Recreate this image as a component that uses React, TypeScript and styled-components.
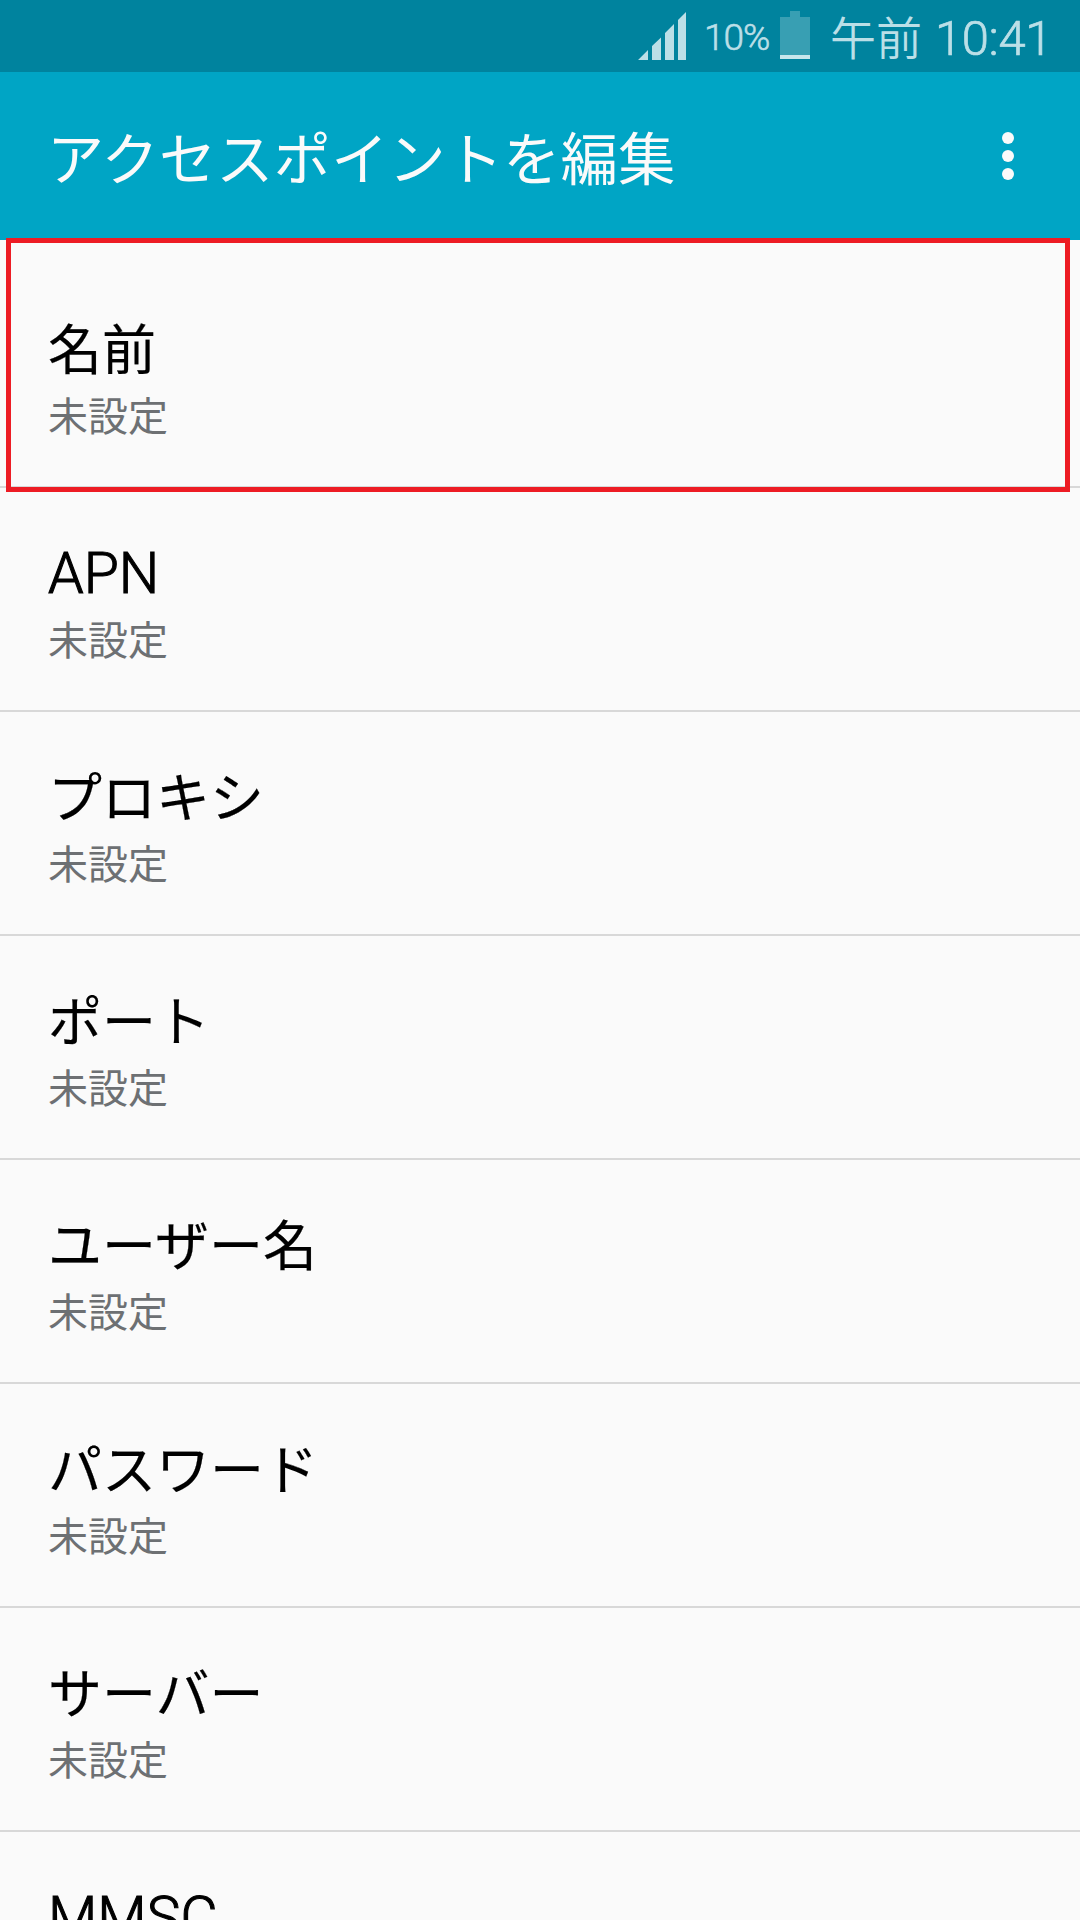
import React from "react";
import styled, { createGlobalStyle } from "styled-components";

const GlobalStyle = createGlobalStyle`
  * { box-sizing: border-box; }
  body {
    margin: 0;
    background: #fafafa;
    font-family: Roboto, "Noto Sans CJK JP", sans-serif;
  }
`;

const Screen = styled.div`
  width: 1080px;
  height: 1920px;
  overflow: hidden;
  background: #fafafa;
`;

const StatusBar = styled.div`
  display: flex;
  align-items: center;
  height: 72px;
  padding-left: 638px;
  background: #00839e;
  color: #bbdfe7;
  white-space: nowrap;
`;

const SignalIcon = styled.svg`
  display: block;
  flex: none;
  width: 48px;
  height: 48px;
`;

const BatteryLevel = styled.span`
  width: 74px;
  margin-left: 18px;
  padding-top: 3px;
  font-size: 37px;
  font-weight: 300;
  line-height: 44px;
  letter-spacing: -1px;
  -webkit-text-stroke: 0.6px currentColor;
`;

const BatteryIcon = styled.svg`
  display: block;
  flex: none;
  width: 30px;
  height: 48px;
  margin: 0 0 2px 2px;
`;

const Clock = styled.div`
  display: flex;
  align-items: baseline;
  height: 72px;
  margin-left: 20px;
  line-height: 77px;
`;

const Meridiem = styled.span`
  width: 105px;
  font-size: 46px;
  font-weight: 350;
`;

const Time = styled.span`
  font-size: 49px;
  font-weight: 300;
  letter-spacing: -0.4px;
  -webkit-text-stroke: 0.7px currentColor;
`;

const AppBar = styled.header`
  display: flex;
  align-items: center;
  justify-content: space-between;
  height: 168px;
  padding: 0 66px 0 47px;
  background: #00a5c5;
`;

const Title = styled.h1`
  margin: 0;
  padding-top: 9px;
  color: #fafafa;
  font-size: 57px;
  font-weight: 400;
  line-height: 84px;
  letter-spacing: 0.4px;
`;

const MenuButton = styled.button`
  display: flex;
  flex-direction: column;
  gap: 6px;
  margin: 0;
  padding: 0;
  border: 0;
  background: none;
`;

const Dot = styled.span`
  width: 12px;
  height: 12px;
  border-radius: 50%;
  background: #fafafa;
`;

const List = styled.ul`
  position: relative;
  margin: 0;
  padding: 24px 0 0;
  list-style: none;
`;

const Highlight = styled.div`
  position: absolute;
  top: -2px;
  left: 6px;
  width: 1064px;
  height: 254px;
  border: 5px solid #ed1c24;
`;

const Row = styled.li`
  height: 224px;
  padding: 50px 48px 0;
  border-bottom: 2px solid #d8d8d8;
`;

const Label = styled.div<{ $latin?: boolean }>`
  height: 72px;
  padding-top: ${(p) => (p.$latin ? 0 : 2)}px;
  color: #000;
  font-size: ${(p) => (p.$latin ? 57 : 54)}px;
  font-weight: ${(p) => (p.$latin ? 300 : 400)};
  line-height: 72px;
  white-space: nowrap;
  -webkit-text-stroke: ${(p) => (p.$latin ? 1.1 : 0.2)}px currentColor;
`;

const Summary = styled.div`
  height: 60px;
  padding-top: 2px;
  color: #6d7073;
  font-size: 40px;
  font-weight: 400;
  line-height: 60px;
`;

const settings = [
  { label: "名前" },
  { label: "APN", latin: true },
  { label: "プロキシ" },
  { label: "ポート" },
  { label: "ユーザー名" },
  { label: "パスワード" },
  { label: "サーバー" },
  { label: "MMSC", latin: true },
];

export default function App() {
  return (
    <Screen>
      <GlobalStyle />
      <StatusBar>
        <SignalIcon viewBox="0 0 48 48" fill="#bbdfe7">
          <path d="M0 48 10 38V48ZM14 48V34L23 25.500V48ZM27 48V21L36 12V48ZM40 48V8L48 0V48Z" />
        </SignalIcon>
        <BatteryLevel>10%</BatteryLevel>
        <BatteryIcon viewBox="0 0 30 48">
          <path d="M10 0H20V6H30V44H0V6H10Z" fill="#389fb3" />
          <path d="M0 44H30V48H0Z" fill="#c8e6ec" />
        </BatteryIcon>
        <Clock>
          <Meridiem>午前</Meridiem>
          <Time>10:41</Time>
        </Clock>
      </StatusBar>
      <AppBar>
        <Title>アクセスポイントを編集</Title>
        <MenuButton aria-label="メニュー">
          <Dot />
          <Dot />
          <Dot />
        </MenuButton>
      </AppBar>
      <List>
        {settings.map((s) => (
          <Row key={s.label}>
            <Label $latin={s.latin}>{s.label}</Label>
            <Summary>未設定</Summary>
          </Row>
        ))}
        <Highlight />
      </List>
    </Screen>
  );
}
